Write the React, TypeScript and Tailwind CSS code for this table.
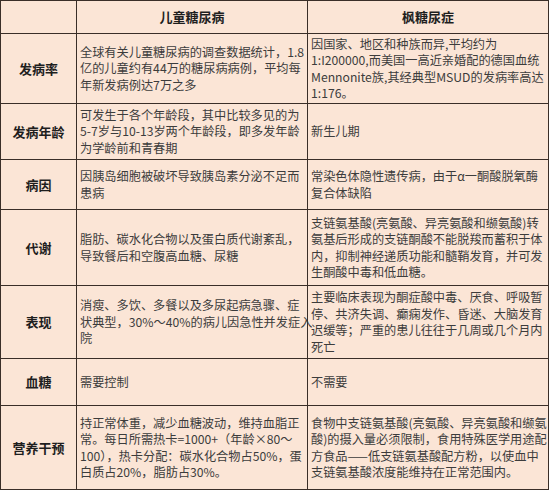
import React from "react";

const rows: { label: string; a: string[]; b: string[] }[] = [
  {
    label: "发病率",
    a: [
      "全球有关儿童糖尿病的调查数据统计，1.8",
      "亿的儿童约有44万的糖尿病病例，平均每",
      "年新发病例达7万之多",
    ],
    b: [
      "因国家、地区和种族而异,平均约为",
      "1:I200000,而美国一高近亲婚配的德国血统",
      "Mennonite族,其经典型MSUD的发病率高达",
      "1:176。",
    ],
  },
  {
    label: "发病年龄",
    a: [
      "可发生于各个年龄段，其中比较多见的为",
      "5-7岁与10-13岁两个年龄段，即多发年龄",
      "为学龄前和青春期",
    ],
    b: ["新生儿期"],
  },
  {
    label: "病因",
    a: ["因胰岛细胞被破坏导致胰岛素分泌不足而", "患病"],
    b: ["常染色体隐性遗传病，由于α一酮酸脱氧酶", "复合体缺陷"],
  },
  {
    label: "代谢",
    a: ["脂肪、碳水化合物以及蛋白质代谢紊乱，", "导致餐后和空腹高血糖、尿糖"],
    b: [
      "支链氨基酸(亮氨酸、异亮氨酸和缬氨酸)转",
      "氨基后形成的支链酮酸不能脱羧而蓄积于体",
      "内，抑制神经递质功能和髓鞘发育，并可发",
      "生酮酸中毒和低血糖。",
    ],
  },
  {
    label: "表现",
    a: [
      "消瘦、多饮、多餐以及多尿起病急骤、症",
      "状典型，30%～40%的病儿因急性并发症入",
      "院",
    ],
    b: [
      "主要临床表现为酮症酸中毒、厌食、呼吸暂",
      "停、共济失调、癫痫发作、昏迷、大脑发育",
      "迟缓等；严重的患儿往往于几周或几个月内",
      "死亡",
    ],
  },
  {
    label: "血糖",
    a: ["需要控制"],
    b: ["不需要"],
  },
  {
    label: "营养干预",
    a: [
      "持正常体重，减少血糖波动，维持血脂正",
      "常。每日所需热卡=1000+（年龄×80～",
      "100），热卡分配：碳水化合物占50%，蛋",
      "白质占20%，脂肪占30%。",
    ],
    b: [
      "食物中支链氨基酸(亮氨酸、异亮氨酸和缬氨",
      "酸)的摄入量必须限制，食用特殊医学用途配",
      "方食品——低支链氨基酸配方粉，以使血中",
      "支链氨基酸浓度能维持在正常范围内。",
    ],
  },
];

const cell = "border-r border-b border-[#3a2e28] flex items-center";

export default function App() {
  return (
    <div
      className="w-[550px] h-[492px] bg-white"
      style={{ fontFamily: '"Noto Sans CJK SC", "Noto Sans", sans-serif' }}
    >
      <div className="w-[549px] grid grid-cols-[76px_231px_241px] grid-rows-[33px_70px_56px_50px_76px_73px_47px_84px] border-l border-t border-[#3a2e28] bg-[#fbe5d6]">
        <div className={cell}></div>
        <div className={`${cell} justify-center text-[13px] font-bold text-[#1e1e1e]`}>儿童糖尿病</div>
        <div className={`${cell} justify-center text-[13px] font-bold text-[#1e1e1e]`}>枫糖尿症</div>
        {rows.map((r) => (
          <React.Fragment key={r.label}>
            <div className={`${cell} justify-center text-[13px] font-bold text-[#1e1e1e]`}>{r.label}</div>
            <div className={`${cell} px-[3px] text-[12.2px] leading-[16.5px] text-[#3c3c3c]`}>
              <div className="whitespace-nowrap">
                {r.a.map((l, i) => (
                  <div key={i}>{l}</div>
                ))}
              </div>
            </div>
            <div className={`${cell} px-[3px] text-[12.2px] leading-[16.5px] text-[#3c3c3c]`}>
              <div className="whitespace-nowrap">
                {r.b.map((l, i) => (
                  <div key={i}>{l}</div>
                ))}
              </div>
            </div>
          </React.Fragment>
        ))}
      </div>
    </div>
  );
}
